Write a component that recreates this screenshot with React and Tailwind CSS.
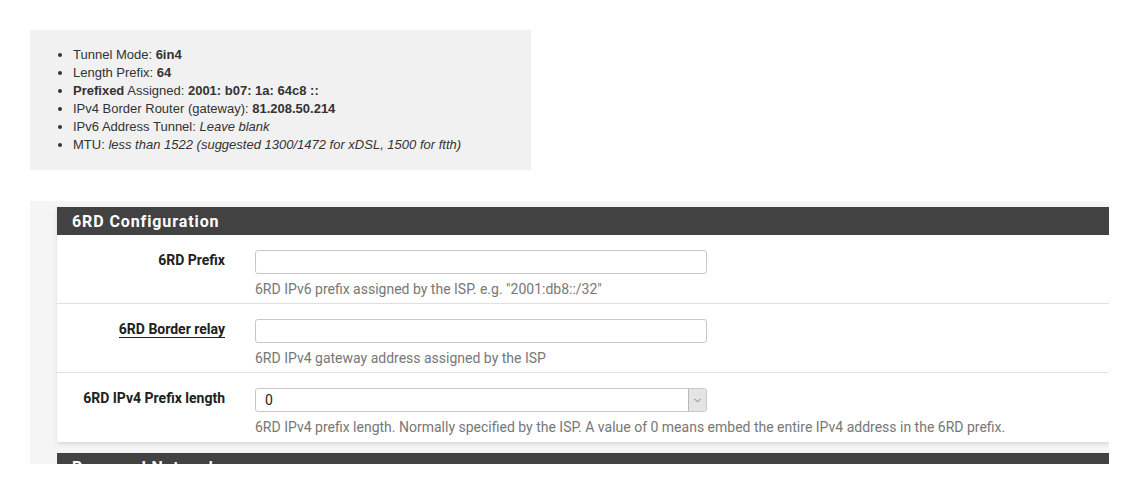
import { ChevronDown } from 'lucide-react'

const rows = [
  { label: '6RD Prefix', help: '6RD IPv6 prefix assigned by the ISP. e.g. "2001:db8::/32"' },
  { label: '6RD Border relay', help: '6RD IPv4 gateway address assigned by the ISP', abbr: true },
  {
    label: '6RD IPv4 Prefix length',
    help: '6RD IPv4 prefix length. Normally specified by the ISP. A value of 0 means embed the entire IPv4 address in the 6RD prefix.',
    select: true,
  },
]

export default function App() {
  return (
    <div className="bg-white h-[495px] overflow-hidden px-[30px] pt-[30px]">
      {/* info box */}
      <div className="w-[501px] h-[140px] bg-[#f1f1f1] pt-[16px] font-['Liberation_Sans',Arial,sans-serif] text-[13px] leading-[18px] text-[#333]">
        <ul className="list-disc pl-[43px]">
          <li>Tunnel Mode: <b>6in4</b></li>
          <li>Length Prefix: <b>64</b></li>
          <li><b>Prefixed</b> Assigned: <b>2001: b07: 1a: 64c8 ::</b></li>
          <li>IPv4 Border Router (gateway): <b>81.208.50.214</b></li>
          <li>IPv6 Address Tunnel: <i>Leave blank</i></li>
          <li>MTU: <i>less than 1522 (suggested 1300/1472 for xDSL, 1500 for ftth)</i></li>
        </ul>
      </div>

      {/* settings area */}
      <div className="mt-[31px] h-[263px] overflow-hidden bg-[#f5f5f5] pl-[27px] pt-[6px] font-['Roboto',sans-serif]">
        <div className="bg-white shadow-[0_2px_4px_rgba(0,0,0,0.12)]">
          <div className="h-[28px] bg-[#424242] pl-[15px] pt-[2px] flex items-center text-white text-[16px] font-bold tracking-[0.9px]">
            6RD Configuration
          </div>
          {rows.map((r, i) => (
            <div key={r.label} className={`flex h-[69px] pt-[15px] ${i < rows.length - 1 ? 'border-b border-[#e0e0e0]' : ''}`}>
              <div className="w-[168px] text-right leading-[20px]">
                <span className={`text-[14px] font-bold text-[#212121] ${r.abbr ? 'border-b-[1.5px] border-[#212121]' : ''}`}>
                  {r.label}
                </span>
              </div>
              <div className="pl-[30px]">
                {r.select ? (
                  <div className="w-[452px] h-[24px] border border-[#c8c8c8] rounded-[3px] flex items-center justify-between">
                    <span className="pl-[9px] text-[14px] text-[#212121]">0</span>
                    <span className="w-[18px] h-[22px] bg-[#e4e4e4] border-l border-[#b8b8b8] rounded-r-[2px] flex items-center justify-center text-[#555]">
                      <ChevronDown size={11} strokeWidth={1.5} />
                    </span>
                  </div>
                ) : (
                  <div className="w-[452px] h-[24px] border border-[#c8c8c8] rounded-[3px]" />
                )}
                <div className="mt-[5px] text-[14px] leading-[20px] text-[#777]">{r.help}</div>
              </div>
            </div>
          ))}
        </div>
        <div className="mt-[11px] h-[28px] bg-[#424242] pl-[15px] pt-[2px] flex items-center text-white text-[16px] font-bold tracking-[0.9px]">
          Reserved Networks
        </div>
      </div>
    </div>
  )
}
